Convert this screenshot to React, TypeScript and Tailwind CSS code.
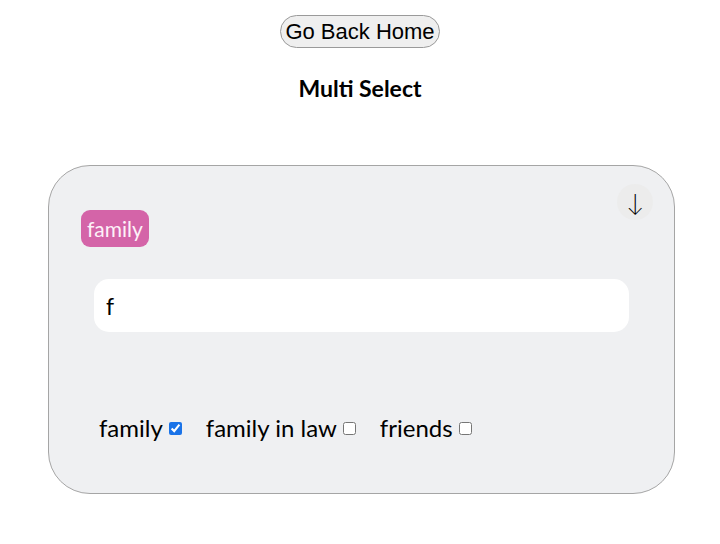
import { useState } from "react";

const options = ["family", "family in law", "friends"];

export default function App() {
  const [selected, setSelected] = useState<string[]>(["family"]);
  const [query, setQuery] = useState("f");

  const toggle = (opt: string) =>
    setSelected((s) => (s.includes(opt) ? s.filter((x) => x !== opt) : [...s, opt]));

  return (
    <div className="min-h-[544px] bg-white font-['Lato',sans-serif] text-black">
      <div className="flex justify-center pt-[15px]">
        <button className="h-[33px] rounded-full border border-[#9a9a9a] bg-[#efefef] px-[4px] font-['Liberation_Sans',Arial,sans-serif] text-[22px] leading-none text-black">
          Go Back Home
        </button>
      </div>

      <h1 className="mt-[27px] text-center text-[23px] font-bold leading-[26px]">Multi Select</h1>

      {/* Select box */}
      <div className="relative mx-auto mt-[64px] ml-[48px] h-[329px] w-[627px] rounded-[42px] border border-[#a5a5a5] bg-[#eff0f2] px-[32px] pt-[44px]">
        <button className="absolute right-[21px] top-[18px] flex h-[36px] w-[36px] items-center justify-center rounded-full bg-[#ececec] text-[24px] font-light leading-none">
          ↓
        </button>

        <div className="flex gap-2">
          {selected.map((s) => (
            <span
              key={s}
              className="flex h-[37px] items-center rounded-[9px] bg-[#d464a8] px-[6px] text-[21px] text-[#fdf1f8]"
            >
              {s}
            </span>
          ))}
        </div>

        <div className="mt-[32px] px-[13px]">
          <input
            value={query}
            onChange={(e) => setQuery(e.target.value)}
            className="h-[53px] w-full rounded-[15px] bg-white px-[12px] text-[23px] outline-none"
          />
        </div>

        <div className="mt-[84px] flex items-center gap-[24px] pl-[18px]">
          {options.map((o) => (
            <label key={o} className="flex items-center gap-[6px] text-[24px] leading-none">
              <span>{o}</span>
              <input
                type="checkbox"
                checked={selected.includes(o)}
                onChange={() => toggle(o)}
                className="m-0 h-[13px] w-[13px] accent-[#1a73e8]"
              />
            </label>
          ))}
        </div>
      </div>
    </div>
  );
}
